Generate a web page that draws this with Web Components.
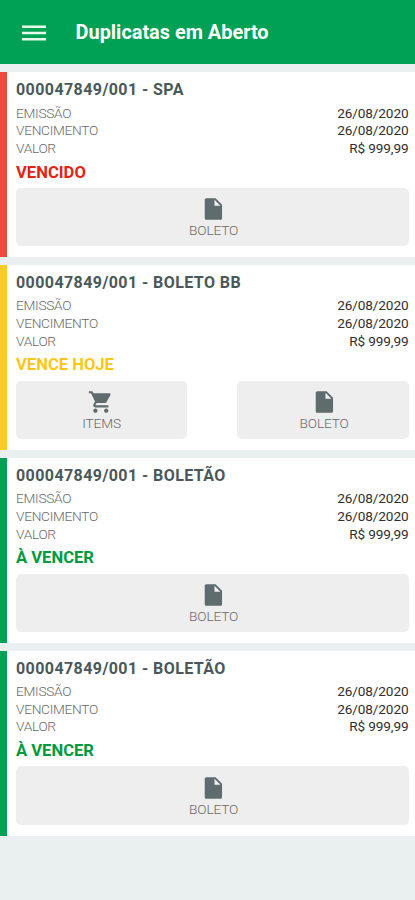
<!DOCTYPE html>
<html lang="pt-BR">
<head>
<meta charset="utf-8">
<title>Duplicatas em Aberto</title>
<style>
html, body { margin: 0; height: 100%; background: #eaeff0; }
body { font-family: Roboto, "Liberation Sans", sans-serif; overflow: hidden; }
</style>
</head>
<body>
<invoice-app></invoice-app>
<script>
class AppHeader extends HTMLElement {
  constructor() {
    super();
    this.attachShadow({ mode: 'open' }).innerHTML = `
      <style>
        :host { display: flex; align-items: center; box-sizing: border-box; height: 63.6px; padding: 1.6px 22px 0; gap: 29.6px; background: #00a154; color: #fff; }
        svg { display: block; width: 24px; height: 16px; fill: #e9fbe9; }
        h1 { margin: 0; font-size: 19.9px; line-height: 24px; font-weight: 700; white-space: nowrap; }
      </style>
      <svg viewBox="0 0 24 16"><path d="M0 .4h24v2.500H0zM0 6.800h24v2.500H0zM0 13.100h24v2.500H0z"/></svg>
      <h1><slot></slot></h1>`;
  }
}
customElements.define('app-header', AppHeader);

class DetailRow extends HTMLElement {
  constructor() {
    super();
    this.attachShadow({ mode: 'open' }).innerHTML = `
      <style>
        :host { display: flex; justify-content: space-between; height: 17.7px; line-height: 17.7px; }
        .label { font-size: 13.7px; font-weight: 300; color: #6a6a6a; letter-spacing: -0.3px; }
        .value { font-size: 13.6px; font-weight: 400; color: #303030; letter-spacing: -0.1px; }
      </style>
      <span class="label"><slot name="label"></slot></span>
      <span class="value"><slot></slot></span>`;
  }
}
customElements.define('detail-row', DetailRow);

const ICONS = {
  file: { shift: 1.4, labelShift: 1.2, path: 'M5.500 2C4.700 2 4 2.700 4 3.500v17c0 .8.700 1.500 1.500 1.500h13c.8 0 1.500-.7 1.500-1.500V8l-6-6H5.500zm7.500 7V3.500L18.500 9H13z' },
  cart: { shift: -1.2, labelShift: -0.3, path: 'M7 18c-1.100 0-1.990.9-1.990 2S5.900 22 7 22s2-.9 2-2-.9-2-2-2zM1 2v2h2l3.600 7.590-1.350 2.450c-.160.280-.250.610-.250.960 0 1.100.9 2 2 2h12v-2H7.420c-.140 0-.250-.110-.250-.250l.030-.120.900-1.630h7.450c.750 0 1.410-.410 1.750-1.030l3.580-6.490c.080-.140.120-.310.120-.480 0-.550-.450-1-1-1H5.210l-.940-2H1zm16 16c-1.100 0-1.990.9-1.990 2s.890 2 1.990 2 2-.9 2-2-.9-2-2-2z' }
};
class ActionButton extends HTMLElement {
  connectedCallback() {
    if (this.shadowRoot) return;
    const icon = ICONS[this.getAttribute('icon')];
    this.attachShadow({ mode: 'open' }).innerHTML = `
      <style>
        :host { display: block; }
        button { all: unset; box-sizing: border-box; display: flex; flex-direction: column; align-items: center; width: 100%; height: 58.5px; padding-top: 8.4px; border-radius: 5px; background: #eee; }
        svg { display: block; width: 26px; height: 26px; fill: #5f6c6d; transform: translateX(${icon.shift}px); }
        span { font-size: 13.7px; line-height: 17px; font-weight: 300; color: #6a6a6a; letter-spacing: -0.15px; transform: translateX(${icon.labelShift}px); }
      </style>
      <button type="button">
        <svg viewBox="0 0 24 24"><path d="${icon.path}"/></svg>
        <span><slot></slot></span>
      </button>`;
  }
}
customElements.define('action-button', ActionButton);

class InvoiceCard extends HTMLElement {
  constructor() {
    super();
    this.attachShadow({ mode: 'open' }).innerHTML = `
      <style>
        :host { display: block; box-sizing: border-box; height: 185px; padding: 8.3px 6.5px 0 9px; border-left: 7px solid var(--tone); background: #fff; }
        h2 { margin: 0 0 4.1px; font-size: 16px; line-height: 20px; font-weight: 700; color: #4a5859; letter-spacing: .42px; }
        p { margin: 4px 0 4.200px; font-size: 16.6px; line-height: 22px; height: 22px; font-weight: 700; color: var(--tone-text); }
        .actions { display: grid; grid-auto-flow: column; grid-auto-columns: 1fr; gap: 50px; padding-left: .3px; }
      </style>
      <h2><slot name="title"></slot></h2>
      <slot name="details"></slot>
      <p><slot name="status"></slot></p>
      <div class="actions"><slot></slot></div>`;
  }
}
customElements.define('invoice-card', InvoiceCard);

const INVOICES = [
  { title: '000047849/001 - SPA', status: 'VENCIDO', tone: '#e74c3c', text: '#e42313' },
  { title: '000047849/001 - BOLETO BB', status: 'VENCE HOJE', tone: '#ffc928', text: '#ffc61a', items: true },
  { title: '000047849/001 - BOLETÃO', status: 'À VENCER', tone: '#00a154', text: '#009a3e' },
  { title: '000047849/001 - BOLETÃO', status: 'À VENCER', tone: '#00a154', text: '#009a3e' }
];
class InvoiceApp extends HTMLElement {
  constructor() {
    super();
    this.attachShadow({ mode: 'open' }).innerHTML = `
      <style>
        :host { display: block; }
        main { display: grid; gap: 7.850px; padding-top: 8.600px; }
      </style>
      <app-header>Duplicatas em Aberto</app-header>
      <main>${INVOICES.map(i => `
        <invoice-card style="--tone:${i.tone};--tone-text:${i.text}">
          <span slot="title">${i.title}</span>
          <detail-row slot="details"><span slot="label">EMISSÃO</span>26/08/2020</detail-row>
          <detail-row slot="details"><span slot="label">VENCIMENTO</span>26/08/2020</detail-row>
          <detail-row slot="details"><span slot="label">VALOR</span>R$ 999,99</detail-row>
          <span slot="status">${i.status}</span>
          ${i.items ? '<action-button icon="cart">ITEMS</action-button>' : ''}
          <action-button icon="file">BOLETO</action-button>
        </invoice-card>`).join('')}
      </main>`;
  }
}
customElements.define('invoice-app', InvoiceApp);
</script>
</body>
</html>
